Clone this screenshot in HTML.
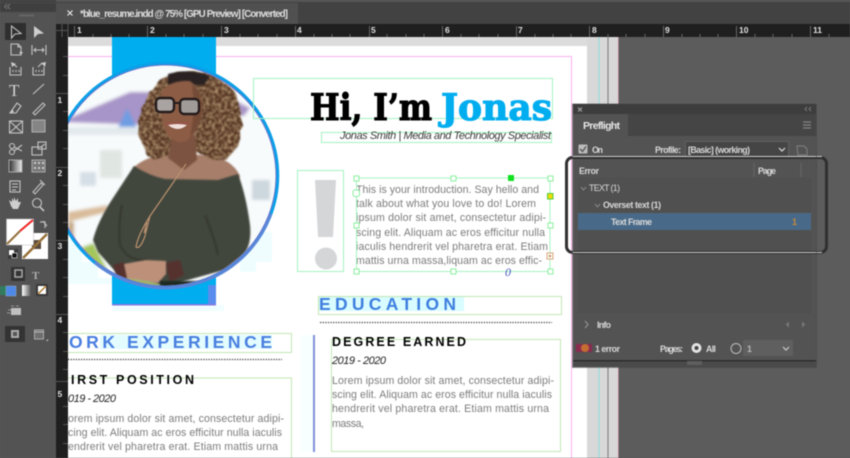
<!DOCTYPE html>
<html lang="en"><head><meta charset="utf-8"><title>blue_resume.indd</title>
<style>
html,body{margin:0;padding:0;width:850px;height:458px;overflow:hidden;background:#5b5b5b}
svg{display:block;filter:blur(.4px)}
text{font-family:"Liberation Sans",sans-serif}
.b{fill:#7c7c7c;font-size:10.600px}
.p{fill:#d8d8d8;font-size:8.800px;font-weight:bold}
.r{fill:#e0e0e0;font-size:8.500px;font-weight:bold}
.f{fill:none;stroke:#a4f3c0;stroke-width:1}
.g{fill:none;stroke:#c3e6b4;stroke-width:1}
.h{fill:#fff;stroke:#8bef9f;stroke-width:1}
.i{fill:none;stroke:#c4c4c4;stroke-width:1.100}
</style></head><body>
<svg width="850" height="458" viewBox="0 0 850 458" xmlns="http://www.w3.org/2000/svg">
<defs>
<clipPath id="pg"><rect x="68" y="37" width="519" height="421"/></clipPath>
<clipPath id="ci"><circle cx="165.500" cy="175.500" r="110"/></clipPath>
<filter id="bl" x="-10%" y="-10%" width="120%" height="120%"><feGaussianBlur stdDeviation="1.600"/></filter>
<filter id="bs" x="-10%" y="-10%" width="120%" height="120%"><feGaussianBlur stdDeviation=".7"/></filter>
<filter id="curl" x="-20%" y="-20%" width="140%" height="140%">
<feTurbulence type="fractalNoise" baseFrequency=".32" numOctaves="2" seed="7" result="n"/>
<feTurbulence type="fractalNoise" baseFrequency=".08" numOctaves="2" seed="3" result="n2"/>
<feDisplacementMap in="SourceGraphic" in2="n2" scale="9" xChannelSelector="R" yChannelSelector="G" result="d"/>
<feColorMatrix in="n" type="matrix" values="0 0 0 0 .60  0 0 0 0 .40  0 0 0 0 .22  1.800 0 0 0 -.75" result="hl"/>
<feComposite in="hl" in2="d" operator="in" result="h2"/>
<feMerge result="m"><feMergeNode in="d"/><feMergeNode in="h2"/></feMerge>
<feGaussianBlur in="m" stdDeviation=".8"/>
</filter>
<linearGradient id="gr" x1="0" x2="1"><stop offset="0" stop-color="#2f2f2f"/><stop offset="1" stop-color="#eee"/></linearGradient>
<linearGradient id="gr2" x1="0" x2="1"><stop offset="0" stop-color="#fff"/><stop offset="1" stop-color="#555"/></linearGradient>
</defs>

<!-- pasteboard -->
<rect width="850" height="458" fill="#5c5c5c"/>
<rect x="68" y="37" width="519" height="9" fill="#dcdcdc"/>
<rect x="68" y="46" width="519" height="412" fill="#fff"/>
<rect x="587" y="37" width="31" height="421" fill="#d8d8d8"/>
<line x1="599" y1="37" x2="599" y2="458" stroke="#8fdede"/>
<line x1="608" y1="37" x2="608" y2="458" stroke="#777"/>
<line x1="618" y1="37" x2="618" y2="458" stroke="#e6b8c8"/>
<path d="M68 56.500H571.500V458" fill="none" stroke="#fbb0ee" stroke-width="1"/>

<!-- page content -->
<g clip-path="url(#pg)">
<path d="M68 240H82V262H98V278H112V311H224V305H216V284H240V272H256V262H272V232H240V284H112V284H68Z" fill="#f0fdff"/>
<rect x="112" y="37" width="104" height="268" fill="#00adef"/>
<rect x="208" y="285" width="8" height="20" fill="#5a8cee"/>
<rect x="112" y="304" width="104" height="1.500" fill="#8a78e0"/>
<circle cx="165.500" cy="175.500" r="111" fill="#fff"/>

<g clip-path="url(#ci)">
<g filter="url(#bl)">
<rect x="50" y="60" width="240" height="230" fill="#f8fbfc"/>
<path d="M60 122L130 92L152 92L150 125Z" fill="#a794c8"/>
<path d="M234 100L250 108L244 116L234 116Z" fill="#a794c8"/>
<path d="M127 108L117 130H138Z" fill="#6e9de2"/>
<rect x="60" y="127" width="92" height="8" fill="#e2e9ec"/>
<rect x="100" y="150" width="22" height="28" fill="#e0e6e2"/>
<rect x="80" y="172" width="16" height="14" fill="#d5dfe6"/>
<rect x="252" y="180" width="18" height="20" fill="#ccd7de"/>
<path d="M68 212L108 205V212L68 222Z" fill="#d9bc9a"/>
<rect x="68" y="222" width="6" height="30" fill="#c4a780"/>
<path d="M80 248L94 243L112 280L100 280Z" fill="#a4c65a"/>
<path d="M196 282L232 272L226 284L196 288Z" fill="#a8cc5c"/>
</g>
<!-- shoulders and chest -->
<path d="M133 168Q146 156 168 154L205 155Q232 158 240 176L238 182L150 182Z" fill="#a67e69" filter="url(#bs)"/>
<!-- hair -->
<path d="M180 72Q215 66 232 90Q248 115 240 140Q236 160 214 160L196 152L170 152Q150 165 146 150Q132 135 143 105Q152 80 180 72Z" fill="#573620" filter="url(#curl)"/>
<path d="M168 74Q190 68 210 76L204 85L168 85Z" fill="#2a2320" filter="url(#bs)"/>
<!-- neck and face -->
<path d="M172 135H195L197 160L184 170L168 158Z" fill="#7b5340" filter="url(#bs)"/>
<path d="M161 92Q170 80 190 81Q203 90 202 112Q199 132 186 141Q175 145 167 134Q158 118 161 92Z" fill="#8c5c44" filter="url(#bs)"/>
<path d="M192 84Q203 92 202 112Q200 128 190 137Q196 110 192 84Z" fill="#6a4430" opacity=".7" filter="url(#bs)"/>
<!-- glasses -->
<rect x="156" y="98" width="18" height="14" rx="4" fill="#a9a3a1" stroke="#241c1c" stroke-width="2.400"/>
<rect x="180" y="99" width="19" height="15" rx="4" fill="#a09a98" stroke="#241c1c" stroke-width="2.400"/>
<line x1="174" y1="103" x2="180" y2="103" stroke="#241c1c" stroke-width="2"/>
<path d="M168 125Q177 123 187 125Q178 133 168 125Z" fill="#f0e0dc"/>
<path d="M166 124Q177 122 189 124" stroke="#9d4f4c" stroke-width="1.200" fill="none"/>
<!-- dress -->
<path d="M134 166Q150 176 165 179L218 180L238 174Q246 195 250 225Q252 245 243 255L224 270L170 285L125 285L114 270L98 252L93 240Q98 220 115 195Z" fill="#42463c" filter="url(#bs)"/>
<path d="M122 205Q118 225 120 245Q128 262 148 260" fill="none" stroke="#34372f" stroke-width="2" filter="url(#bs)"/>
<path d="M205 215Q215 240 218 255" fill="none" stroke="#34372f" stroke-width="2" filter="url(#bs)"/>
<path d="M113 265L124 262L130 285L118 280Z" fill="#55322f" filter="url(#bs)"/>
<path d="M165 263L180 260L184 275L170 282Z" fill="#55322f" filter="url(#bs)"/>
<!-- necklace -->
<path d="M186 164L150 216Q138 235 136 247Q140 250 145 236L150 216M147 222Q142 240 146 228" fill="none" stroke="#b8906f" stroke-width="1.200"/>
<!-- hands -->
<path d="M124 264L146 260L166 261L166 274L158 283H128Z" fill="#bd907a" filter="url(#bs)"/>
<path d="M126 278L148 281L160 284L158 290H126Z" fill="#9fb56a" filter="url(#bs)"/>
<rect x="160" y="281" width="48" height="8" fill="#1f2b20" filter="url(#bs)"/>
</g>
<circle cx="165.500" cy="175.500" r="112" fill="none" stroke="#0aa0e8" stroke-width="3.500"/>
<circle cx="165.500" cy="175.500" r="110.500" fill="none" stroke="#6a76cc" stroke-width="1"/>
<path d="M271 214A112 112 0 0 1 95 263" fill="none" stroke="#5f86d8" stroke-width="2.500"/>

<!-- header -->
<rect x="253.500" y="78.500" width="299" height="40" class="f"/>
<text x="310" y="120" font-size="36" font-weight="bold" style="font-family:'DejaVu Serif',serif" fill="#000" stroke="#000" stroke-width="1.100" textLength="122" lengthAdjust="spacingAndGlyphs">Hi, I’m</text>
<text x="441" y="120" font-size="36" font-weight="bold" style="font-family:'DejaVu Serif',serif" fill="#00adef" stroke="#00adef" stroke-width="1.100" textLength="111" lengthAdjust="spacingAndGlyphs">Jonas</text>
<rect x="321.500" y="132.500" width="230" height="10" class="f"/>
<text x="340" y="139" font-size="11" font-style="italic" fill="#3a3a3a" textLength="211">Jonas Smith | Media and Technology Specialist</text>

<!-- exclamation -->
<rect x="297.500" y="170.500" width="46" height="101" class="f"/>
<path d="M315 180H336L333 237H318Z" fill="#d4d6d8"/>
<circle cx="326" cy="258.500" r="11" fill="#d4d6d8"/>

<!-- intro -->
<text class="b" x="356" y="193" textLength="183">This is your introduction. Say hello and</text>
<text class="b" x="356" y="207" textLength="180">talk about what you love to do! Lorem</text>
<text class="b" x="356" y="221" textLength="190">ipsum dolor sit amet, consectetur adipi-</text>
<text class="b" x="356" y="236" textLength="189">scing elit. Aliquam ac eros efficitur nulla</text>
<text class="b" x="356" y="250" textLength="192">iaculis hendrerit vel pharetra erat. Etiam</text>
<text class="b" x="356" y="264" textLength="186">mattis urna massa,liquam ac eros effic-</text>
<rect x="356.500" y="178" width="193.500" height="93.500" class="f"/>
<g>
<rect x="354" y="176" width="5" height="5" class="h"/><rect x="451" y="176" width="5" height="5" class="h"/><rect x="548" y="176" width="5" height="5" class="h"/>
<rect x="354" y="223" width="5" height="5" class="h"/><rect x="548" y="223" width="5" height="5" class="h"/>
<rect x="354" y="269" width="5" height="5" class="h"/><rect x="451" y="269" width="5" height="5" class="h"/><rect x="548" y="269" width="5" height="5" class="h"/>
<rect x="508" y="175" width="6" height="6" fill="#0fe01f"/>
<rect x="547.500" y="193.500" width="5.500" height="5.500" fill="#f5d90a" stroke="#4bd13a"/>
<rect x="353" y="190" width="6.500" height="6.500" rx="2" class="h"/>
<rect x="547" y="253" width="6" height="6" fill="#fff" stroke="#d8a777"/>
<path d="M548.500 256H551.500M550 254.500V257.500" stroke="#b57a3a" stroke-width=".8"/>
<text x="505" y="276" font-size="12" font-style="italic" fill="#4a55c0" style="font-family:'Liberation Serif',serif">0</text>
</g>

<!-- education -->
<rect x="319" y="296" width="145" height="15" fill="#d8fcff"/>
<rect x="318.500" y="296.500" width="243" height="18" class="g"/>
<text x="319" y="310" font-size="17.500" font-weight="bold" fill="#3f7fdf" textLength="137">EDUCATION</text>
<line x1="320" y1="322.500" x2="552" y2="322.500" stroke="#444" stroke-width="1.300" stroke-dasharray="1.300 1.300"/>
<rect x="300" y="335" width="14" height="117" fill="#f8ffff"/>
<rect x="313" y="335" width="2" height="117" fill="#7f90d8"/>
<rect x="331.500" y="339.500" width="229" height="112" class="g"/>
<text x="332" y="346" font-size="12.500" font-weight="bold" fill="#000" textLength="134">DEGREE EARNED</text>
<text x="332" y="364" font-size="11" font-style="italic" fill="#222" textLength="54">2019 - 2020</text>
<text class="b" x="332" y="384" textLength="222">Lorem ipsum dolor sit amet, consectetur adipi-</text>
<text class="b" x="332" y="398" textLength="220">scing elit. Aliquam ac eros efficitur nulla iaculis</text>
<text class="b" x="332" y="412" textLength="217">hendrerit vel pharetra erat. Etiam mattis urna</text>
<text class="b" x="332" y="427" textLength="32">massa,</text>

<!-- work -->
<rect x="100" y="335" width="172" height="14" fill="#e2fcff"/>
<rect x="60" y="333.500" width="231.500" height="19" class="g"/>
<text x="69" y="348" font-size="17.500" font-weight="bold" fill="#4a7fe0" textLength="203">ORK EXPERIENCE</text>
<line x1="68" y1="359.500" x2="282" y2="359.500" stroke="#444" stroke-width="1.300" stroke-dasharray="1.300 1.300"/>
<rect x="60" y="378" width="231.500" height="90" class="g"/>
<text x="71" y="384" font-size="12.500" font-weight="bold" fill="#000" textLength="123">IRST POSITION</text>
<text x="68" y="402" font-size="11" font-style="italic" fill="#222" textLength="48">019 - 2020</text>
<text class="b" x="68" y="422" textLength="216">orem ipsum dolor sit amet, consectetur adipi-</text>
<text class="b" x="68" y="436" textLength="214">cing elit. Aliquam ac eros efficitur nulla iaculis</text>
<text class="b" x="68" y="450" textLength="210">endrerit vel pharetra erat. Etiam mattis urna</text>
</g>

<!-- left ruler -->
<rect x="56" y="24" width="12" height="434" fill="#1f1f1f"/>
<g stroke="#555" stroke-width="1">
<path d="M63 56.500H68M63 75.500H68M56 93.500H68M63 111.500H68M63 130.500H68M63 148.500H68M56 167.500H68M63 185.500H68M63 204.500H68M63 222.500H68M56 240.500H68M63 259.500H68M63 277.500H68M63 296.500H68M56 314.500H68M63 332.500H68M63 351.500H68M63 369.500H68M56 381.500H68M63 406.500H68M63 424.500H68M63 443.500H68"/>
</g>
<text class="r" x="57.500" y="103">1</text><text class="r" x="57.500" y="176">2</text><text class="r" x="57.500" y="249">3</text><text class="r" x="57.500" y="323">4</text><text class="r" x="57.500" y="397">5</text>

<!-- tab bar -->
<rect y="0" width="850" height="24" fill="#424242"/>
<rect x="0" y="0" width="850" height="2" fill="#555"/>
<rect x="56" y="3" width="242" height="21" fill="#505050"/>
<path d="M67.500 10.500L72.500 15.500M72.500 10.500L67.500 15.500" stroke="#e6e6e6" stroke-width="1.200"/>
<text x="80" y="17" font-size="9.800" font-weight="bold" fill="#dedede" textLength="208">*blue_resume.indd @ 75% [GPU Preview] [Converted]</text>

<!-- top ruler -->
<rect x="56" y="24" width="794" height="13" fill="#1f1f1f"/>
<path d="M56 30.500H68M68 24V37M62 24V37" stroke="#555"/>
<g stroke="#666" stroke-width="1"><path d="M74.500 26V37M147.500 26V37M221.500 26V37M295.500 26V37M369.500 26V37M442.500 26V37M516.500 26V37M589.500 26V37M663.500 26V37M736.500 26V37M810.500 26V37"/>
<path d="M93 34V37M111 34V37M129 34V37M166 34V37M184 34V37M203 34V37M240 34V37M258 34V37M277 34V37M314 34V37M332 34V37M350 34V37M387 34V37M406 34V37M424 34V37M461 34V37M479 34V37M498 34V37M535 34V37M553 34V37M571 34V37M608 34V37M626 34V37M645 34V37M682 34V37M700 34V37M718 34V37M755 34V37M773 34V37M792 34V37M829 34V37"/></g>
<text class="r" x="77" y="33">1</text><text class="r" x="150" y="33">2</text><text class="r" x="224" y="33">3</text><text class="r" x="297" y="33">4</text><text class="r" x="371" y="33">5</text><text class="r" x="445" y="33">6</text><text class="r" x="518" y="33">7</text><text class="r" x="592" y="33">8</text><text class="r" x="665" y="33">9</text><text class="r" x="739" y="33">10</text><text class="r" x="813" y="33">11</text>

<!-- toolbar -->
<rect x="0" y="0" width="56" height="458" fill="#535353"/>
<rect x="0" y="0" width="56" height="12" fill="#3f3f3f"/>
<rect x="0" y="2" width="56" height="1" fill="#4a4a4a"/>
<path d="M7 4L4.500 6.500L7 9M10 4L7.500 6.500L10 9" fill="none" stroke="#777" stroke-width=".9"/>
<rect x="19" y="14.500" width="15" height="2" fill="#666"/>
<rect x="5" y="23" width="21" height="17" fill="#2f2f2f"/>
<path d="M11.500 26L11.500 38L15 34L21 33.500Z" class="i"/>
<path d="M34 26V38L38 34L44 33.500Z" fill="#cfcfcf"/>
<path d="M11 44H18L21 47V55H11ZM18 44V47H21" class="i"/><path d="M19 52H23L21 55Z" fill="#ccc"/>
<path d="M32 45V55M46 45V55M34 50H44M36 48L34 50L36 52M42 48L44 50L42 52" class="i"/>
<path d="M10 67V75H21V67M13 70V72M16 70V72M19 70V72M13 64L17 67" class="i"/><path d="M11 62L16 64L12 67Z" fill="#ccc"/>
<path d="M33 67V75H44V67M36 70V72M39 70V72M42 70V72M38 67L42 63" class="i"/><path d="M46 62L41 63L45 67Z" fill="#ccc"/>
<text x="9" y="96" font-size="17" fill="#d4d4d4" style="font-family:'Liberation Serif',serif">T</text>
<path d="M33 94L44 84" class="i"/>
<path d="M10 113L17 103L21 106L16 113Z" class="i"/><path d="M10 113L12.500 109.500L14 112Z" fill="#ccc"/>
<path d="M33 113L43 103L45 105L35 115Z" class="i"/>
<rect x="9.500" y="121" width="13" height="12" class="i"/><path d="M9.500 121L22.500 133M22.500 121L9.500 133" class="i"/>
<rect x="32" y="120" width="13" height="12" fill="#858585" stroke="#b0b0b0"/>
<circle cx="12" cy="146" r="2.500" class="i"/><circle cx="12" cy="152" r="2.500" class="i"/><path d="M14 147L22 151M14 151L22 145" class="i"/>
<rect x="32" y="147" width="10" height="8" class="i"/><rect x="38" y="142" width="8" height="7" class="i"/><path d="M41 147L45 144" class="i"/>
<rect x="9" y="160" width="13" height="12" fill="url(#gr)" stroke="#aaa"/>
<rect x="32" y="160" width="13" height="12" fill="#777" stroke="#aaa"/>
<path d="M34 163H36M38 163H40M42 163H44M34 168H36M38 168H40M42 168H44" stroke="#ccc" stroke-width="2"/>
<rect x="10" y="181" width="10" height="11" class="i"/><path d="M12 184H18M12 187H18M12 190H16" stroke="#ccc"/>
<path d="M33 192L41 183L43 185L35 194ZM40 180L45 185" class="i"/>
<path d="M11 206L9 200L12 202V198L14 201V197L16 201L18 198L18 202L21 202L18 209H13Z" fill="#cfcfcf"/>
<circle cx="37" cy="203" r="4.500" class="i"/><path d="M40 207L44 211" stroke="#c4c4c4" stroke-width="1.600"/>

<!-- fill and stroke -->
<rect x="22" y="233" width="26" height="26" fill="#fff"/>
<rect x="32" y="240" width="9" height="9" fill="#5a4a3c"/>
<path d="M23 258L47 234" stroke="#96703a" stroke-width="2.500"/>
<rect x="6.500" y="219" width="27" height="26" fill="#fff" stroke="#bbb" stroke-width=".5"/>
<path d="M7 244L20 231" stroke="#96703a" stroke-width="2"/>
<path d="M20 231L33 220" stroke="#ee2222" stroke-width="2"/>
<path d="M43 221L47 226M45 228V222H40" fill="none" stroke="#bbb" stroke-width="1.200"/>
<rect x="8" y="249" width="10" height="10" fill="#3b3b3b"/><rect x="9" y="250" width="5" height="5" fill="#fff"/><rect x="12" y="253" width="5" height="5" fill="#111" stroke="#fff" stroke-width=".6"/>
<rect x="11" y="267" width="14" height="14" fill="#333"/><rect x="15" y="270" width="7" height="7" fill="none" stroke="#aaa" stroke-width="1.500"/>
<text x="32" y="279" font-size="11" font-weight="bold" fill="#b0b0b0" style="font-family:'Liberation Serif',serif">T</text>
<rect x="0" y="286" width="6" height="9" fill="#2f7d5e"/>
<rect x="6" y="286" width="10" height="10" fill="#4e88e8" stroke="#9ab" stroke-width=".5"/>
<rect x="22" y="285" width="9" height="11" fill="url(#gr2)"/>
<rect x="36" y="284" width="12" height="12" fill="#3a3a3a"/><rect x="38" y="286" width="8" height="8" fill="#fff"/><path d="M38 294L46 286" stroke="#b07a30" stroke-width="1.500"/>
<rect x="11" y="308" width="10" height="7" fill="#c0c0c0"/><path d="M11 306H14M16 306H19M11 310H8M10 313H7" stroke="#999"/>
<rect x="5" y="326" width="20" height="16" fill="#333"/><rect x="11" y="330" width="8" height="8" fill="#aaa"/><rect x="13" y="332" width="4" height="4" fill="#555"/>
<rect x="34.500" y="330" width="9" height="9" fill="#6f6f6f" stroke="#aaa"/><path d="M34 332H44" stroke="#bbb"/>
<path d="M46 341H48V339Z" fill="#ccc"/>

<!-- panel -->
<rect x="573" y="104" width="243" height="263" fill="#535353"/>
<rect x="573" y="104" width="243" height="10" fill="#3d3d3d"/>
<rect x="573" y="114" width="243" height="22" fill="#454545"/>
<rect x="573" y="114" width="55" height="22" fill="#535353"/>
<path d="M578 107.500L582 111.500M582 107.500L578 111.500" stroke="#aaa"/>
<path d="M807 107L805 109L807 111M811 107L809 109L811 111" fill="none" stroke="#777"/>
<text x="583" y="129" font-size="10.500" font-weight="bold" fill="#e6e6e6" textLength="37">Preflight</text>
<path d="M803 122H811M803 125H811M803 128H811" stroke="#858585" stroke-width="1.300"/>
<rect x="578.500" y="144.500" width="9" height="9" rx="1" fill="#bbb"/>
<path d="M580 149L582.500 151.500L586 146.500" stroke="#555" stroke-width="1.300" fill="none"/>
<text class="p" x="592" y="153" textLength="11">On</text>
<text class="p" x="655" y="153" textLength="26">Profile:</text>
<rect x="685.500" y="141.500" width="103" height="15" fill="#454545" stroke="#606060"/>
<text class="p" x="688" y="153" textLength="62">[Basic] (working)</text>
<path d="M779 148L782 151L785 148" stroke="#ddd" fill="none" stroke-width="1.200"/>
<path d="M797 146H804L807 149V155H798Z" fill="none" stroke="#808080"/>

<rect x="578" y="177.500" width="233" height="136" fill="#505050"/>
<text class="p" x="579" y="174" textLength="20">Error</text>
<text class="p" x="758" y="174" textLength="18">Page</text>
<path d="M754 163V177M801 163V177" stroke="#666"/>
<path d="M581 187L583.500 190L586 187" fill="none" stroke="#888"/>
<text class="p" x="589" y="191" style="font-weight:normal" textLength="31">TEXT (1)</text>
<path d="M595 204L597.500 207L600 204" fill="none" stroke="#888"/>
<text class="p" x="603" y="208" textLength="58">Overset text (1)</text>
<rect x="578" y="213" width="233" height="17" fill="#486a88"/>
<text class="p" x="611" y="225" textLength="41">Text Frame</text>
<text x="792" y="225" font-size="9" font-weight="bold" fill="#c8883c">1</text>

<!-- callout -->
<rect x="566.500" y="157.500" width="260" height="95" rx="6" fill="none" stroke="#303030" stroke-width="3"/>
<path d="M572 156.500H822M572 252.500H822" stroke="#d0d0d0" stroke-width="1"/>

<path d="M585 321L588 324.500L585 328" fill="none" stroke="#999"/>
<text class="p" x="597" y="328" textLength="14">Info</text>
<path d="M789 321.500L785.500 324.500L789 327.500Z" fill="#777"/><path d="M802 321.500L805.500 324.500L802 327.500Z" fill="#777"/>
<rect x="576" y="344" width="16" height="8" fill="#8a2c50"/><circle cx="585" cy="348" r="4" fill="#c46e32"/>
<text class="p" x="595" y="352" textLength="25">1 error</text>
<text class="p" x="660" y="352" textLength="23">Pages:</text>
<circle cx="696.500" cy="348" r="5" fill="#e4e4e4"/><circle cx="696.500" cy="348" r="2" fill="#444"/>
<text class="p" x="706" y="352" textLength="10">All</text>
<circle cx="736" cy="348.500" r="5" fill="none" stroke="#bbb"/>
<rect x="743" y="340" width="50" height="16" fill="#5f5f5f"/>
<text class="p" x="747" y="352" style="fill:#b8b8b8">1</text>
<path d="M783 347L786 350L789 347" fill="none" stroke="#ccc" stroke-width="1.200"/>
<rect x="573" y="360" width="243" height="7" fill="#4a4a4a"/>
<rect x="573" y="360" width="243" height="1.500" fill="#2e2e2e"/>
<rect x="687" y="361" width="15" height="4" fill="#5e5e5e"/>
<rect x="572.500" y="104" width="244" height="263.500" fill="none" stroke="#444" stroke-width=".6"/>
</svg>
</body></html>
